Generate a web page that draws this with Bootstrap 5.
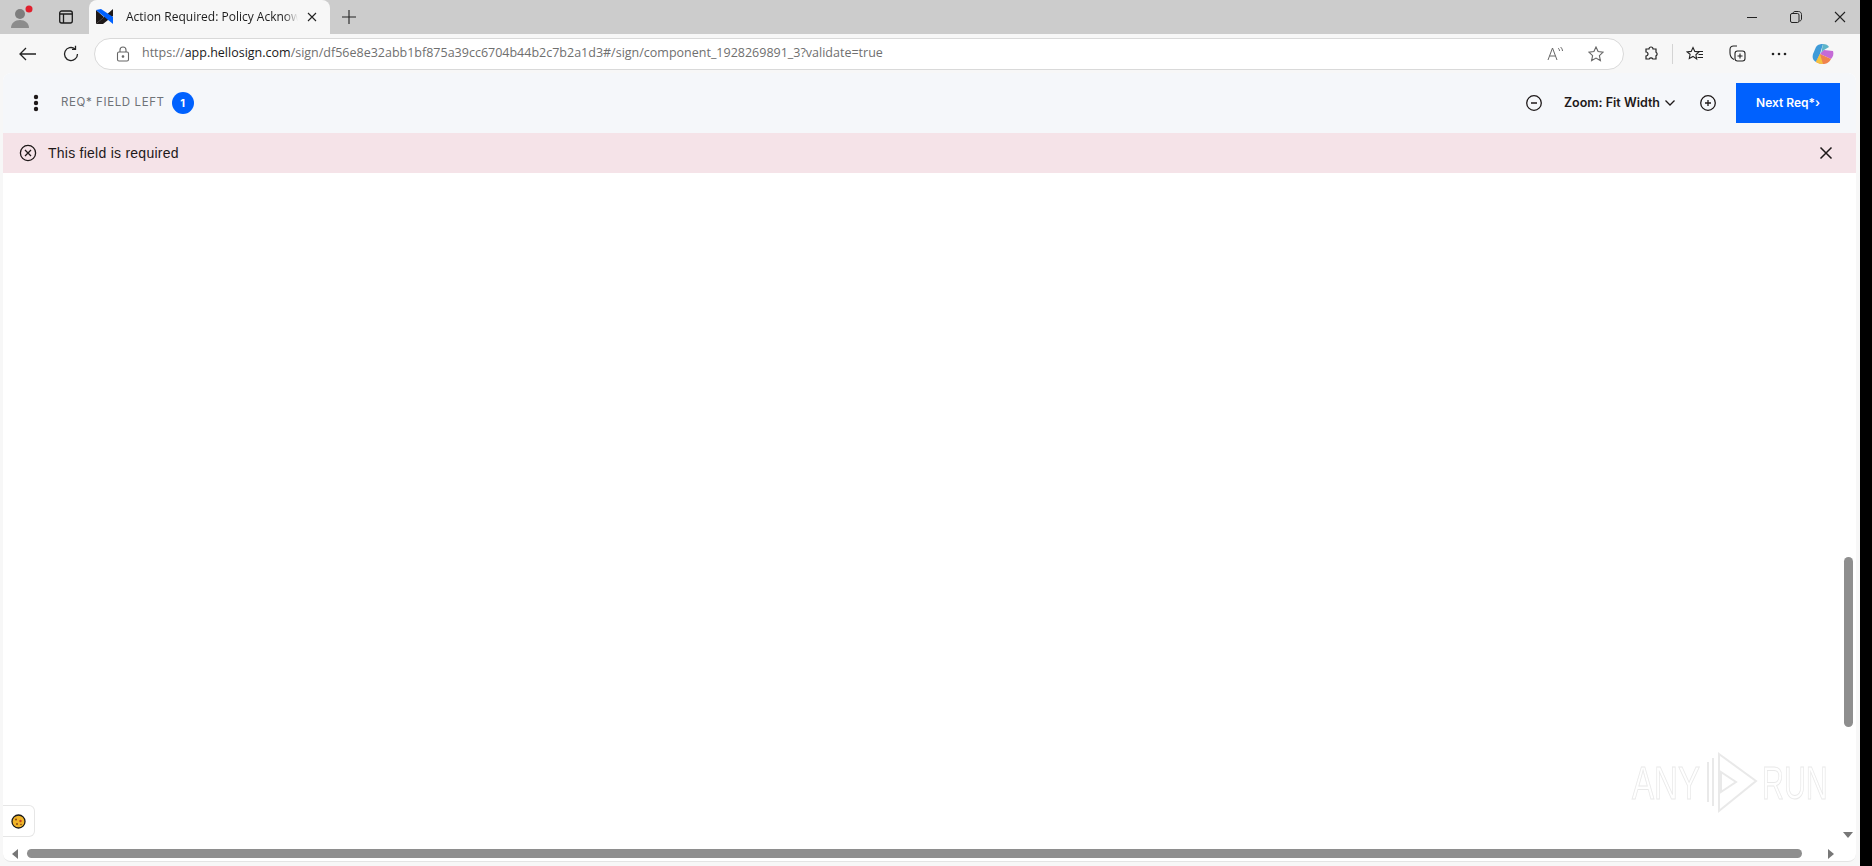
<!DOCTYPE html>
<html lang="en">
<head>
    <meta charset="UTF-8">
    <meta name="viewport" content="width=device-width, initial-scale=1">
    <title>Action Required: Policy Acknowledgement</title>
    <link href="https://cdn.jsdelivr.net/npm/bootstrap@5.3.0/dist/css/bootstrap.min.css" rel="stylesheet">
    <style>
        html, body { height: 100%; overflow: hidden; background: #000; }
        body { font-family: "Open Sans", "Liberation Sans", sans-serif; }
        svg { display: block; flex: none; }
        .win { width: 1860px; height: 866px; background: #f7f7f7; }

        /* tab strip */
        .tabstrip { height: 34px; background: #cccccc; }
        .profile-slot { width: 44px; }
        .vtabs-slot { width: 44px; margin-right: 1px; }
        .tab-cur { width: 241px; height: 34px; background: #f7f7f7; border-radius: 8px 8px 0 0; padding-left: 6px; padding-right: 13px; margin-top: 0; }
        .tab-title { width: 177px; margin-left: 11px; margin-right: 9px; font-size: 12px; color: #1c1c1c; white-space: nowrap; overflow: hidden; -webkit-mask-image: linear-gradient(to right, #000 92%, transparent); mask-image: linear-gradient(to right, #000 92%, transparent); }
        .newtab-slot { margin-left: 12px; }
        .win-ctrls { gap: 32px; padding-right: 14px; }

        /* toolbar */
        .toolbar { height: 39px; padding-left: 18px; }
        .urlbar { width: 1530px; height: 32px; margin-left: 14px; background: #fff; border: 1px solid #d9d9d9; border-radius: 16px; padding-left: 21px; padding-right: 19px; }
        .url-text { margin-left: 12px; font-size: 12.5px; color: #6f6f6f; white-space: nowrap; }
        .url-text b { font-weight: 400; color: #1a1a1a; }
        .tool-icons { gap: 25px; margin-left: 19px; }
        .tool-sep { width: 1px; height: 20px; background: #d4d4d4; margin: 0 -12px; }

        /* hellosign page */
        .page-box { position: relative; height: 789px; margin-left: 3px; width: 1853px; background: #fff; border-radius: 8px 8px 8px 8px; overflow: hidden; border-bottom: 1px solid #e4e4e4; }
        .sign-bar { height: 60px; background: #f5f7fa; padding-left: 30px; padding-right: 16px; }
        .req-label { margin-left: 22px; font-size: 11.5px; letter-spacing: .6px; color: #6f7378; font-family: Inter, "Liberation Sans", sans-serif; }
        .req-count { width: 22px; height: 22px; margin-left: 7px; background: #0061fe; color: #fff; font-size: 11px; font-weight: 700; border-radius: 50%; font-family: Inter, "Liberation Sans", sans-serif; }
        .zoom-label { margin: 0 0 0 21px; font-size: 12.5px; font-weight: 600; color: #1e1919; font-family: Inter, "Liberation Sans", sans-serif; }
        .zoom-plus { margin-left: 23px; margin-right: 19px; }
        .next-btn { width: 104px; height: 40px; padding: 0; background: #0061fe; color: #fff; border: 0; border-radius: 0; font-size: 12px; font-weight: 600; font-family: Inter, "Liberation Sans", sans-serif; }
        .next-btn:hover { background: #0061fe; color: #fff; }
        .err-bar { height: 40px; background: #f5e3e8; padding-left: 16px; padding-right: 23px; }
        .err-text { margin-left: 11px; font-size: 14px; letter-spacing: .25px; color: #1e1919; font-family: "Liberation Sans", sans-serif; }

        /* things over the page */
        .cookie-btn { position: absolute; left: 0; top: 732px; width: 32px; height: 32px; background: #fff; border: 1px solid #e6e6e6; border-left: 0; border-radius: 0 6px 6px 0; }
        .thumb-v { position: absolute; left: 1841px; top: 484px; width: 9px; height: 170px; background: #8e8e8e; border-radius: 5px; }
        .thumb-h { position: absolute; left: 24px; top: 776px; width: 1775px; height: 9px; background: #8e8e8e; border-radius: 5px; }
        .arrow-l { position: absolute; left: 8px; top: 776px; }
        .arrow-r { position: absolute; left: 1824px; top: 776px; }
        .arrow-d { position: absolute; left: 1840px; top: 758px; }
        .wm { position: absolute; left: 1629px; top: 681px; height: 58px; gap: 4px; color: transparent; -webkit-text-stroke: 1px #e9e9e9; font-family: "Liberation Sans", sans-serif; font-size: 46px; line-height: 46px; }
        .wm-word { display: inline-block; width: 68px; transform-origin: left center; transform: scaleX(.72); white-space: nowrap; }
        .wm-word2 { width: 64px; transform: scaleX(.66); }
    </style>
</head>
<body>
<div class="win d-flex flex-column">

    <!-- tab strip -->
    <div class="tabstrip d-flex align-items-center">
        <div class="profile-slot d-flex justify-content-center position-relative">
            <svg width="24" height="24" viewBox="0 0 24 24">
                <circle cx="10" cy="9" r="5" fill="#7d7d7d"/>
                <path d="M1 23c0-5 4-8 9-8s9 3 9 8z" fill="#8c8c8c"/>
                <circle cx="19" cy="4" r="3.5" fill="#e0202e"/>
            </svg>
        </div>
        <div class="vtabs-slot d-flex justify-content-center">
            <svg width="16" height="16" viewBox="0 0 16 16" fill="none" stroke="#1c1c1c" stroke-width="1.3">
                <rect x="1.7" y="2" width="12.6" height="12" rx="2"/>
                <path d="M1.7 5h12.6M5.5 5v9" />
            </svg>
        </div>
        <div class="tab-cur d-flex align-items-center">
            <svg width="20" height="18" viewBox="0 0 20 18">
                <path d="M1 2l8 7-8 7z" fill="#1e1919"/>
                <path d="M18 1L1 16l7 0L18 8z" fill="#1e1919"/>
                <path d="M1 2l17 14v-7L6 1z" fill="#0061fe"/>
                <path d="M18 1l-9 8 9 7z" fill="#1e1919" opacity=".0"/>
            </svg>
            <div class="tab-title">Action Required: Policy Acknowledgement</div>
            <svg width="10" height="10" viewBox="0 0 10 10" stroke="#222" stroke-width="1.1"><path d="M1 1l8 8M9 1l-8 8"/></svg>
        </div>
        <div class="newtab-slot">
            <svg width="14" height="14" viewBox="0 0 14 14" stroke="#222" stroke-width="1.1"><path d="M7 0v14M0 7h14"/></svg>
        </div>
        <div class="win-ctrls d-flex align-items-center ms-auto">
            <svg width="12" height="12" viewBox="0 0 12 12" stroke="#222"><path d="M1 6.5h10"/></svg>
            <svg width="12" height="12" viewBox="0 0 12 12" fill="none" stroke="#222"><rect x=".5" y="2.5" width="8.5" height="9" rx="1.5"/><path d="M3 2.5c0-1 .7-2 2-2h3.5c1.7 0 3 1.3 3 3V8c0 1-.8 2-2 2"/></svg>
            <svg width="12" height="12" viewBox="0 0 12 12" stroke="#222" stroke-width="1.1"><path d="M1 1l10 10M11 1L1 11"/></svg>
        </div>
    </div>

    <!-- address bar -->
    <div class="toolbar d-flex align-items-center">
        <svg width="20" height="16" viewBox="0 0 20 16" fill="none" stroke="#222" stroke-width="1.3"><path d="M18 8H2M8 2L2 8l6 6"/></svg>
        <svg class="ms-4" width="18" height="18" viewBox="0 0 18 18" fill="none" stroke="#222" stroke-width="1.3"><path d="M15.5 9A6.5 6.5 0 1 1 13 3.9"/><path d="M13.5 .8v3.6H10"/></svg>
        <div class="urlbar d-flex align-items-center">
            <svg width="14" height="16" viewBox="0 0 14 16" fill="none" stroke="#666" stroke-width="1.1"><rect x="1.5" y="6" width="11" height="9" rx="1.5"/><path d="M4 6V4a3 3 0 0 1 6 0v2"/><circle cx="7" cy="10.5" r=".8" fill="#666"/></svg>
            <span class="url-text">https://<b>app.hellosign.com</b>/sign/df56e8e32abb1bf875a39cc6704b44b2c7b2a1d3#/sign/component_1928269891_3?validate=true</span>
            <svg class="ms-auto" width="17" height="15" viewBox="0 0 17 15" fill="none" stroke="#666" stroke-width="1"><path d="M1 14L5.5 2 10 14M2.7 10h5.6"/><path d="M11 2c1 .8 1.5 1.8 1.5 3M13.500 1c1.200 1 2 2.500 2 4"/></svg>
            <svg class="ms-4" width="16" height="16" viewBox="0 0 16 16" fill="none" stroke="#666" stroke-width="1.1"><path d="M8 1l2.100 4.600 5 .6-3.700 3.400 1 5L8 12.100 3.600 14.600l1-5L.9 6.200l5-.6z"/></svg>
        </div>
        <div class="tool-icons d-flex align-items-center">
            <svg width="16" height="16" viewBox="0 0 16 16" fill="none" stroke="#222" stroke-width="1.2"><path d="M6 3a2 2 0 0 1 4 0h3v3.200a2 2 0 0 1 0 3.600V13H9.800a2 2 0 0 0-3.600 0H3V10a2 2 0 0 0 0-4V3z"/></svg>
            <span class="tool-sep"></span>
            <svg width="18" height="16" viewBox="0 0 18 16" fill="none" stroke="#222" stroke-width="1.1"><path d="M7 1.500l1.800 3.900 4.200.5-3.100 2.900.8 4.200L7 10.400 3.300 12.500l.8-4.200L1 5.900l4.200-.5z"/><path d="M12 5.500h5M12.500 8.500h4.500M11.500 11.500h5.500"/></svg>
            <svg width="17" height="17" viewBox="0 0 17 17" fill="none" stroke="#222" stroke-width="1.1"><path d="M5 14.500C3 13.500 1 11 1 8V4.500C1 2.500 2.500 1 4.500 1H8"/><rect x="6" y="6" width="10" height="10" rx="2.500"/><path d="M11 8.500v5M8.500 11h5"/></svg>
            <svg width="16" height="4" viewBox="0 0 16 4" fill="#222"><circle cx="2" cy="2" r="1.300"/><circle cx="8" cy="2" r="1.300"/><circle cx="14" cy="2" r="1.300"/></svg>
            <svg width="22" height="22" viewBox="0 0 22 22">
                <path d="M4 4c2-3 5-3 7-3l-3 10-4 8c-3-2-4-4-3-8z" fill="#3f9bd8"/>
                <path d="M11 1c3 0 5 1 6 3l-5 3-3 4z" fill="#5fb5c9"/>
                <path d="M8 11l4-4 9 1c1 3 0 6-2 8z" fill="#c56bd6"/>
                <path d="M4 19l4-8 11 5c-2 4-5 5-8 5-3 0-5-1-7-2z" fill="#f0824d"/>
                <path d="M4 19l4-8 3 10c-3 0-5-1-7-2z" fill="#f4c33f"/>
            </svg>
        </div>
    </div>

    <!-- page -->
    <div class="page-box">
        <div class="sign-bar d-flex align-items-center">
            <svg width="6" height="18" viewBox="0 0 6 18" fill="#1e1919"><circle cx="3" cy="3" r="2.200"/><circle cx="3" cy="9" r="2.200"/><circle cx="3" cy="15" r="2.200"/></svg>
            <span class="req-label">REQ* FIELD LEFT</span>
            <span class="req-count d-flex align-items-center justify-content-center">1</span>
            <svg class="ms-auto" width="18" height="18" viewBox="0 0 18 18" fill="none" stroke="#1e1919" stroke-width="1.300"><circle cx="9" cy="9" r="7.300"/><path d="M6 9h6"/></svg>
            <span class="zoom-label">Zoom: Fit Width</span>
            <svg class="ms-1" width="12" height="8" viewBox="0 0 12 8" fill="none" stroke="#1e1919" stroke-width="1.300"><path d="M1.500 1.500L6 6l4.500-4.500"/></svg>
            <svg class="zoom-plus" width="18" height="18" viewBox="0 0 18 18" fill="none" stroke="#1e1919" stroke-width="1.300"><circle cx="9" cy="9" r="7.300"/><path d="M6 9h6M9 6v6"/></svg>
            <button type="button" class="btn next-btn">Next Req*›</button>
        </div>
        <div class="err-bar d-flex align-items-center">
            <svg width="18" height="18" viewBox="0 0 18 18" fill="none" stroke="#1e1919" stroke-width="1.300"><circle cx="9" cy="9" r="7.600"/><path d="M6 6l6 6M12 6l-6 6"/></svg>
            <span class="err-text">This field is required</span>
            <svg class="ms-auto" width="14" height="14" viewBox="0 0 14 14" stroke="#1e1919" stroke-width="1.500"><path d="M1.500 1.500l11 11M12.500 1.500l-11 11"/></svg>
        </div>

        <div class="wm d-flex align-items-center">
            <span class="wm-word">ANY</span>
            <svg width="54" height="62" viewBox="0 0 54 62" fill="none" stroke="#e9e9e9" stroke-width="2"><path d="M4 10v40M9 6v48M15 2l37 27-37 30zM17 20v20l15-10z"/></svg>
            <span class="wm-word wm-word2">RUN</span>
        </div>

        <div class="cookie-btn d-flex align-items-center justify-content-center">
            <svg width="15" height="15" viewBox="0 0 15 15">
                <circle cx="7.500" cy="7.500" r="6.500" fill="#f0b429" stroke="#1a1a1a" stroke-width="1.300"/>
                <circle cx="5" cy="5.500" r="1" fill="#8a4b14"/><circle cx="9.500" cy="7" r="1.200" fill="#c8401c"/><circle cx="6" cy="10" r="1" fill="#8a4b14"/><circle cx="10" cy="10.500" r=".8" fill="#8a4b14"/>
            </svg>
        </div>
        <div class="thumb-v"></div>
        <div class="thumb-h"></div>
        <svg class="arrow-l" width="8" height="10" viewBox="0 0 8 10" fill="#777"><path d="M7 0v10L1 5z"/></svg>
        <svg class="arrow-r" width="8" height="10" viewBox="0 0 8 10" fill="#777"><path d="M1 0v10l6-5z"/></svg>
        <svg class="arrow-d" width="10" height="8" viewBox="0 0 10 8" fill="#777"><path d="M0 1h10L5 7z"/></svg>
    </div>
</div>
<script src="https://cdn.jsdelivr.net/npm/bootstrap@5.3.0/dist/js/bootstrap.bundle.min.js"></script>
</body>
</html>
